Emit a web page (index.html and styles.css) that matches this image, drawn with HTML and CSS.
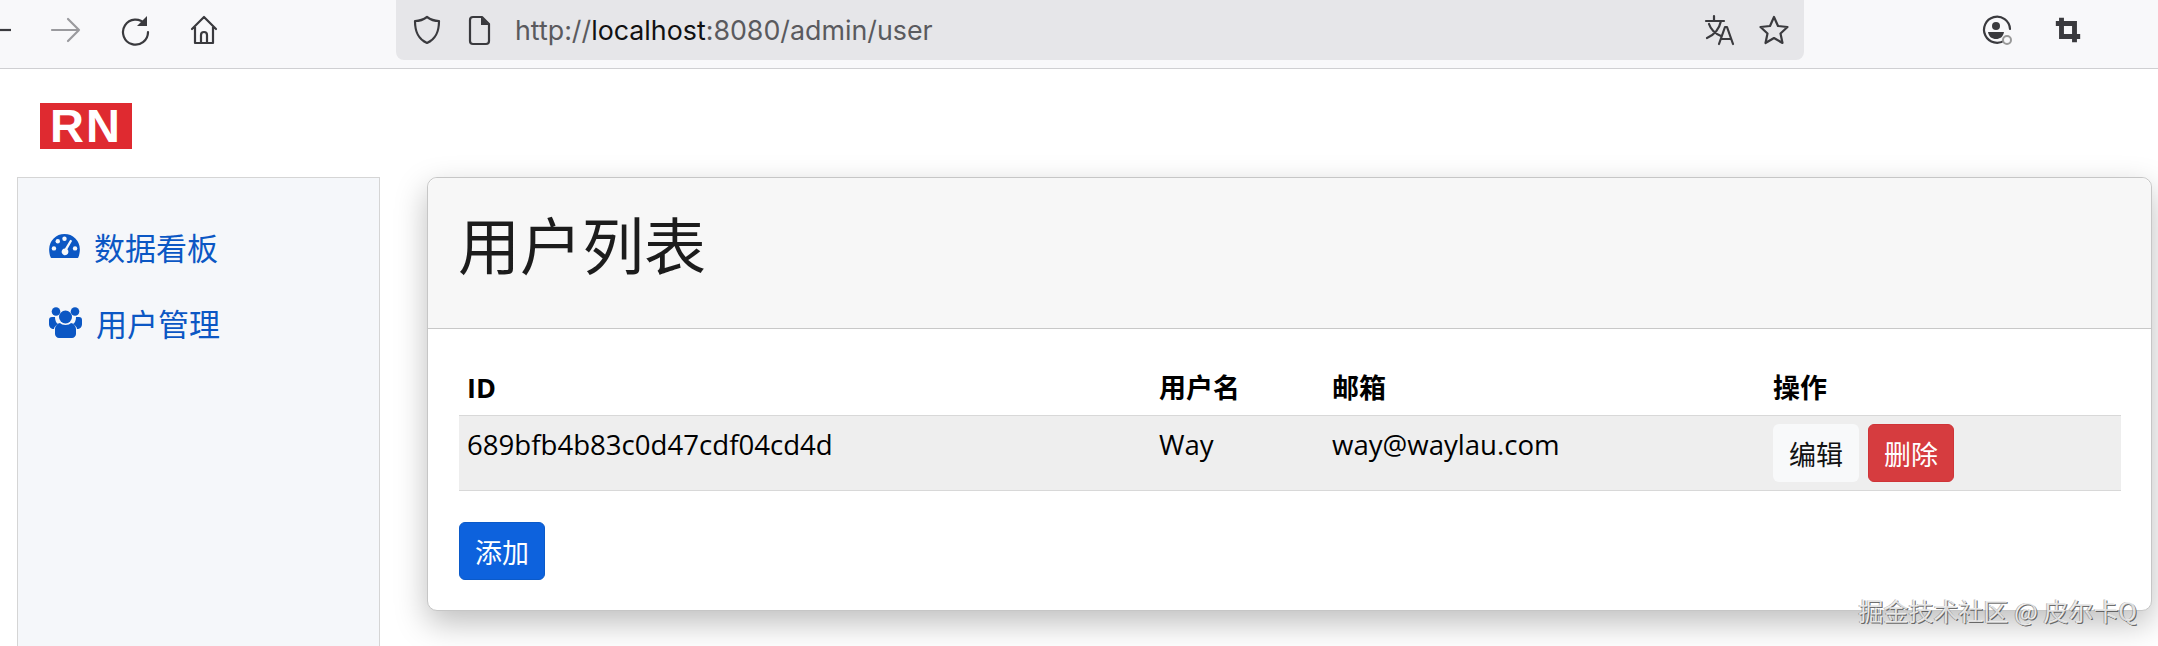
FILE: index.html
```html
<!DOCTYPE html>
<html lang="zh-CN">
<head>
    <meta charset="UTF-8">
    <meta name="viewport" content="width=device-width, initial-scale=1.0">
    <title>用户列表</title>
    <link rel="stylesheet" href="styles.css">
</head>
<body>
    <div class="toolbar">
        <svg class="back-stub" viewBox="0 0 12 32"><path d="M0 16h11" /></svg>
        <svg class="icon forward" viewBox="0 0 32 32"><path d="M2 16h27M18 5l11 11-11 11" /></svg>
        <svg class="icon" viewBox="0 0 32 32"><path d="M26 10a12.500 12.500 0 1 0 3 8" /><path class="fill" d="M28 2v10H18z" /></svg>
        <svg class="icon" viewBox="0 0 32 32"><path d="M4 15 16 3l12 12M7 13v16h18V13M13 29v-8a3 3 0 0 1 6 0v8" /></svg>
        <div class="url-bar">
            <svg class="icon" viewBox="0 0 32 32"><path d="M16 3c4 3 8 4 12 4 0 11-3 18-12 22C7 25 4 18 4 7c4 0 8-1 12-4z" /></svg>
            <svg class="icon" viewBox="0 0 32 32"><path d="M7 6a3 3 0 0 1 3-3h9l7 7v17a3 3 0 0 1-3 3H10a3 3 0 0 1-3-3z" /><path class="fill" d="M18 3l8 8h-8z" /></svg>
            <div class="url-text">http://<b>localhost</b>:8080/admin/user</div>
            <div class="url-actions">
                <svg class="icon" viewBox="0 0 32 32"><path d="M2 7h18M10 2v5M17 7c-2 9-7 14-14 17M5 10c2 6 7 10 12 12M15 30l6-17h2l6 17M17 25h10" /></svg>
                <svg class="icon" viewBox="0 0 32 32"><path d="M16 3l4 9 9.500 1-7 6.500 2 9.500-8.500-5-8.500 5 2-9.500-7-6.500L12 12z" /></svg>
            </div>
        </div>
        <div class="tool-actions">
            <svg class="icon" viewBox="0 0 32 32"><path d="M24 26a13 13 0 1 1 5-11" /><circle class="fill" cx="15" cy="12" r="4" /><path class="fill" d="M7 18h16c-1 5-4 7-8 7s-7-2-8-7z" /><circle class="badge" cx="26" cy="26" r="4" /></svg>
            <svg class="icon crop" viewBox="0 0 32 32"><path d="M8 1v23h23M1 8h23v23" /></svg>
        </div>
    </div>

    <div class="logo-row">
        <div class="logo">RN</div>
    </div>

    <div class="main">
        <div class="sidebar">
            <a class="nav-item" href="#">
                <svg class="nav-icon dash" viewBox="0 0 32 25">
                    <path class="dome" d="M16 0a16 16 0 0 1 16 16c0 3-.5 6-1.500 8a1 1 0 0 1-1 1H2.500a1 1 0 0 1-1-1C.5 22 0 19 0 16A16 16 0 0 1 16 0z" />
                    <circle class="dot" cx="5" cy="15" r="2.300" />
                    <circle class="dot" cx="9" cy="7.500" r="2.300" />
                    <circle class="dot" cx="16" cy="5" r="2.300" />
                    <circle class="dot" cx="27" cy="15" r="2.300" />
                    <path class="dot" d="M22 6l2 1-5 9a3.500 3.500 0 1 1-2.500-1z" />
                </svg>
                <span>数据看板</span>
            </a>
            <a class="nav-item" href="#">
                <svg class="nav-icon users" viewBox="0 0 33 31">
                    <circle class="dome" cx="7" cy="4.500" r="4.300" />
                    <circle class="dome" cx="26" cy="4.500" r="4.300" />
                    <circle class="dome" cx="16.500" cy="10" r="6.500" />
                    <path class="dome" d="M0 13c0-2 1-3 3-3h3c0 3 1 6 3 7-2 1-4 3-4 5-3 0-5-2-5-5zM33 13c0-2-1-3-3-3h-3c0 3-1 6-3 7 2 1 4 3 4 5 3 0 5-2 5-5z" />
                    <path class="dome" d="M6 22c0-3 3-6 5-6 1 1 3 2 5.500 2s4.500-1 5.500-2c2 0 5 3 5 6v5c0 2-2 4-4 4H10c-2 0-4-2-4-4z" />
                </svg>
                <span>用户管理</span>
            </a>
        </div>

        <div class="card">
            <div class="card-header">
                <h1>用户列表</h1>
            </div>
            <div class="card-body">
                <table class="user-table">
                    <colgroup>
                        <col class="col-id">
                        <col class="col-name">
                        <col class="col-mail">
                        <col>
                    </colgroup>
                    <thead>
                        <tr>
                            <th>ID</th>
                            <th>用户名</th>
                            <th>邮箱</th>
                            <th>操作</th>
                        </tr>
                    </thead>
                    <tbody>
                        <tr>
                            <td>689bfb4b83c0d47cdf04cd4d</td>
                            <td>Way</td>
                            <td>way@waylau.com</td>
                            <td>
                                <div class="actions">
                                    <button class="btn btn-light">编辑</button>
                                    <button class="btn btn-danger">删除</button>
                                </div>
                            </td>
                        </tr>
                    </tbody>
                </table>
                <button class="btn btn-primary">添加</button>
            </div>
        </div>
    </div>

    <div class="watermark">掘金技术社区 @ 皮尔卡Q</div>
</body>
</html>
```

FILE: styles.css
```css
html, body {
    height: 100%;
}

body {
    font-family: "Open Sans", "Noto Sans CJK SC", sans-serif;
    background-color: #fff;
    color: #000;
    margin: 0;
    padding: 0;
    overflow: hidden;
    position: relative;
}

/* browser chrome */
.toolbar {
    display: flex;
    align-items: center;
    height: 60px;
    padding-bottom: 8px;
    background-color: #f8f8fa;
    border-bottom: 1px solid #cfcfd2;
}

.icon {
    width: 32px;
    height: 32px;
    flex: none;
    fill: none;
    stroke: #3a3a3e;
    stroke-width: 2.2;
    stroke-linejoin: round;
    stroke-linecap: round;
}

.icon .fill {
    fill: #3a3a3e;
    stroke: none;
}

.icon .badge {
    fill: #f8f8fa;
    stroke: #999;
    stroke-width: 2;
}

.back-stub {
    width: 12px;
    height: 32px;
    flex: none;
    fill: none;
    stroke: #3a3a3e;
    stroke-width: 2.2;
}

.forward {
    margin-left: 38px;
    stroke: #9a9a9e;
}

.toolbar > .icon + .icon {
    margin-left: 37px;
}

.toolbar > .back-stub + .icon {
    margin-left: 38px;
}

.url-bar {
    display: flex;
    align-items: center;
    gap: 20px;
    width: 1408px;
    height: 60px;
    margin-left: 176px;
    padding: 0 14px 0 15px;
    box-sizing: border-box;
    background-color: #e6e6e9;
    border-radius: 0 0 8px 8px;
}

.url-text {
    font-family: "Inter", "Noto Sans", sans-serif;
    font-size: 26.8px;
    color: #5a5a5e;
    white-space: nowrap;
}

.url-text b {
    font-weight: 400;
    color: #111;
}

.url-actions {
    display: flex;
    gap: 22px;
    margin-left: auto;
}

.tool-actions {
    display: flex;
    align-items: center;
    gap: 42px;
    margin-left: 177px;
}

.crop {
    width: 26px;
    height: 26px;
    stroke-width: 6;
    stroke-linecap: butt;
    stroke-linejoin: miter;
}

/* logo */
.logo-row {
    padding: 34px 0 28px 40px;
}

.logo {
    width: 92px;
    height: 46px;
    background-color: #df2a30;
    color: #fff;
    font-family: "Liberation Sans", sans-serif;
    font-size: 47px;
    font-weight: 700;
    letter-spacing: 2px;
    line-height: 46px;
    text-align: center;
}

/* page */
.main {
    display: flex;
    align-items: flex-start;
    gap: 47px;
    padding-left: 17px;
}

.sidebar {
    width: 363px;
    height: 500px;
    padding-top: 30px;
    box-sizing: border-box;
    background-color: #f5f7fa;
    border: 1px solid #d5d5d5;
}

.nav-item {
    display: flex;
    align-items: center;
    gap: 14px;
    height: 76px;
    padding-left: 31px;
    color: #0b57c4;
    font-size: 31px;
    text-decoration: none;
}

.nav-icon {
    flex: none;
}

.dash {
    width: 31px;
    height: 24px;
}

.users {
    width: 33px;
    height: 31px;
}

.dome {
    fill: #0b57c4;
}

.dot {
    fill: #f5f7fa;
}

.card {
    width: 1725px;
    box-sizing: border-box;
    background-color: #fff;
    border: 1px solid #c6c6c6;
    border-radius: 10px;
    box-shadow: 0 12px 32px rgba(0, 0, 0, 0.26);
}

.card-header {
    display: flex;
    align-items: center;
    height: 130px;
    padding: 0 0 20px 30px;
    background-color: #f7f7f7;
    border-bottom: 1px solid #c8c8c8;
    border-radius: 10px 10px 0 0;
}

.card-header h1 {
    margin: 0;
    font-size: 62px;
    font-weight: 400;
    color: #1c1c1c;
}

.card-body {
    padding: 32px 30px 30px 31px;
}

.user-table {
    width: 100%;
    table-layout: fixed;
    border-collapse: collapse;
    margin-bottom: 31px;
}

.col-id {
    width: 692px;
}

.col-name {
    width: 173px;
}

.col-mail {
    width: 441px;
}

.user-table th {
    height: 54px;
    padding: 0 8px;
    font-size: 27px;
    font-weight: 700;
    line-height: 38px;
    text-align: left;
}

.user-table td {
    padding: 8px;
    font-size: 27.6px;
    line-height: 40px;
    vertical-align: top;
    background-color: #eee;
    border-top: 1px solid #d8d8d8;
    border-bottom: 1px solid #d8d8d8;
}

.actions {
    display: flex;
    gap: 9px;
}

.btn {
    width: 86px;
    height: 58px;
    padding: 0;
    border: 1px solid transparent;
    border-radius: 6px;
    font-family: "Noto Sans CJK SC", sans-serif;
    font-size: 27px;
    cursor: pointer;
}

.btn-light {
    background-color: #f8f9fa;
    color: #111;
}

.btn-danger {
    background-color: #d63c3f;
    border-color: #cf3438;
    color: #fff;
}

.btn-primary {
    display: block;
    background-color: #0d62dd;
    border-color: #0b5ac9;
    color: #fff;
}

.watermark {
    position: absolute;
    right: 21px;
    top: 592px;
    font-family: "Noto Sans CJK SC", sans-serif;
    font-size: 25px;
    color: rgba(255, 255, 255, 0.8);
    text-shadow: 1px 1px 0 rgba(70, 70, 70, 0.8), -1px 0 0 rgba(110, 110, 110, 0.5);
    white-space: nowrap;
}
```
